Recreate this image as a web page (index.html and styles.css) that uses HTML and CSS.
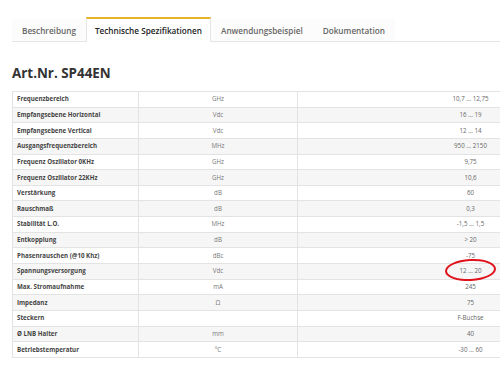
FILE: index.html
```html
<!DOCTYPE html>
<html lang="de">
<head>
<meta charset="utf-8">
<link rel="stylesheet" href="styles.css">
</head>
<body>
<div class="page">
  <ul class="tabs">
    <li class="tab">Beschreibung</li>
    <li class="tab active">Technische Spezifikationen</li>
    <li class="tab">Anwendungsbeispiel</li>
    <li class="tab">Dokumentation</li>
  </ul>
  <h2 class="title">Art.Nr. SP44EN</h2>
  <div class="table-wrap">
    <table class="specs">
      <tr><td class="label">Frequenzbereich</td><td class="unit">GHz</td><td class="val">10,7 ... 12,75</td></tr>
      <tr><td class="label">Empfangsebene Horizontal</td><td class="unit">Vdc</td><td class="val">16 ... 19</td></tr>
      <tr><td class="label">Empfangsebene Vertical</td><td class="unit">Vdc</td><td class="val">12 ... 14</td></tr>
      <tr><td class="label">Ausgangsfrequenzbereich</td><td class="unit">MHz</td><td class="val">950 ... 2150</td></tr>
      <tr><td class="label">Frequenz Oszillator 0KHz</td><td class="unit">GHz</td><td class="val">9,75</td></tr>
      <tr><td class="label">Frequenz Oszillator 22KHz</td><td class="unit">GHz</td><td class="val">10,6</td></tr>
      <tr><td class="label">Verstärkung</td><td class="unit">dB</td><td class="val">60</td></tr>
      <tr><td class="label">Rauschmaß</td><td class="unit">dB</td><td class="val">0,3</td></tr>
      <tr><td class="label">Stabilität L.O.</td><td class="unit">MHz</td><td class="val">-1,5 ... 1,5</td></tr>
      <tr><td class="label">Entkopplung</td><td class="unit">dB</td><td class="val">&gt; 20</td></tr>
      <tr><td class="label">Phasenrauschen (@10 Khz)</td><td class="unit">dBc</td><td class="val">-75</td></tr>
      <tr><td class="label">Spannungsversorgung</td><td class="unit">Vdc</td><td class="val"><span class="mark">12 ... 20</span></td></tr>
      <tr><td class="label">Max. Stromaufnahme</td><td class="unit">mA</td><td class="val">245</td></tr>
      <tr><td class="label">Impedanz</td><td class="unit">Ω</td><td class="val">75</td></tr>
      <tr><td class="label">Steckern</td><td class="unit"></td><td class="val">F-Buchse</td></tr>
      <tr><td class="label">Ø LNB Halter</td><td class="unit">mm</td><td class="val">40</td></tr>
      <tr><td class="label">Betriebstemperatur</td><td class="unit">°C</td><td class="val">-30 ... 60</td></tr>
    </table>
  </div>
</div>
</body>
</html>
```
FILE: styles.css
```css
html, body {
  margin: 0;
  padding: 0;
  background: #fff;
  overflow: hidden;
}
body {
  font-family: "Open Sans", "Liberation Sans", sans-serif;
  color: #333;
}
.page {
  padding: 17px 0 0 12px;
}
.tabs {
  list-style: none;
  margin: 0;
  padding: 0;
  display: flex;
  border-bottom: 1px solid #e6e6e6;
  height: 24px;
}
.tab {
  padding: 0 10px;
  font-size: 8.2px;
  font-weight: 600;
  color: #666;
  display: flex;
  align-items: center;
  margin-top: 2px;
  background: #fcfcfc;
}
.tab.active {
  color: #222;
  background: #fff;
  border-top: 2px solid #e6b325;
  border-left: 1px solid #e6e6e6;
  border-right: 1px solid #e6e6e6;
  margin-top: 0;
  margin-bottom: -1px;
  padding: 0 8px;
}
.title {
  margin: 22px 0 9px 0;
  font-size: 13.4px;
  font-weight: 700;
  color: #333;
  line-height: 18px;
}
.table-wrap {
  overflow: hidden;
}
.specs {
  border-collapse: collapse;
  width: 632px;
  table-layout: fixed;
}
.specs tr:nth-child(even) td {
  background: #f6f6f6;
}
.specs td {
  border: 1px solid #e3e3e3;
  height: 14.65px;
  padding: 0 4px;
  font-size: 6.2px;
  line-height: 8px;
  vertical-align: middle;
}
.specs .label {
  width: 117px;
  font-weight: 700;
  color: #444;
}
.specs .unit {
  width: 150px;
  text-align: center;
  color: #777;
}
.specs .val {
  text-align: center;
  color: #666;
}
.mark {
  position: relative;
}
.mark::after {
  content: "";
  position: absolute;
  left: -14px;
  right: -15px;
  top: -7px;
  bottom: -6px;
  border: 2px solid #e0121b;
  border-radius: 50%;
  transform: rotate(-3deg);
}
```
